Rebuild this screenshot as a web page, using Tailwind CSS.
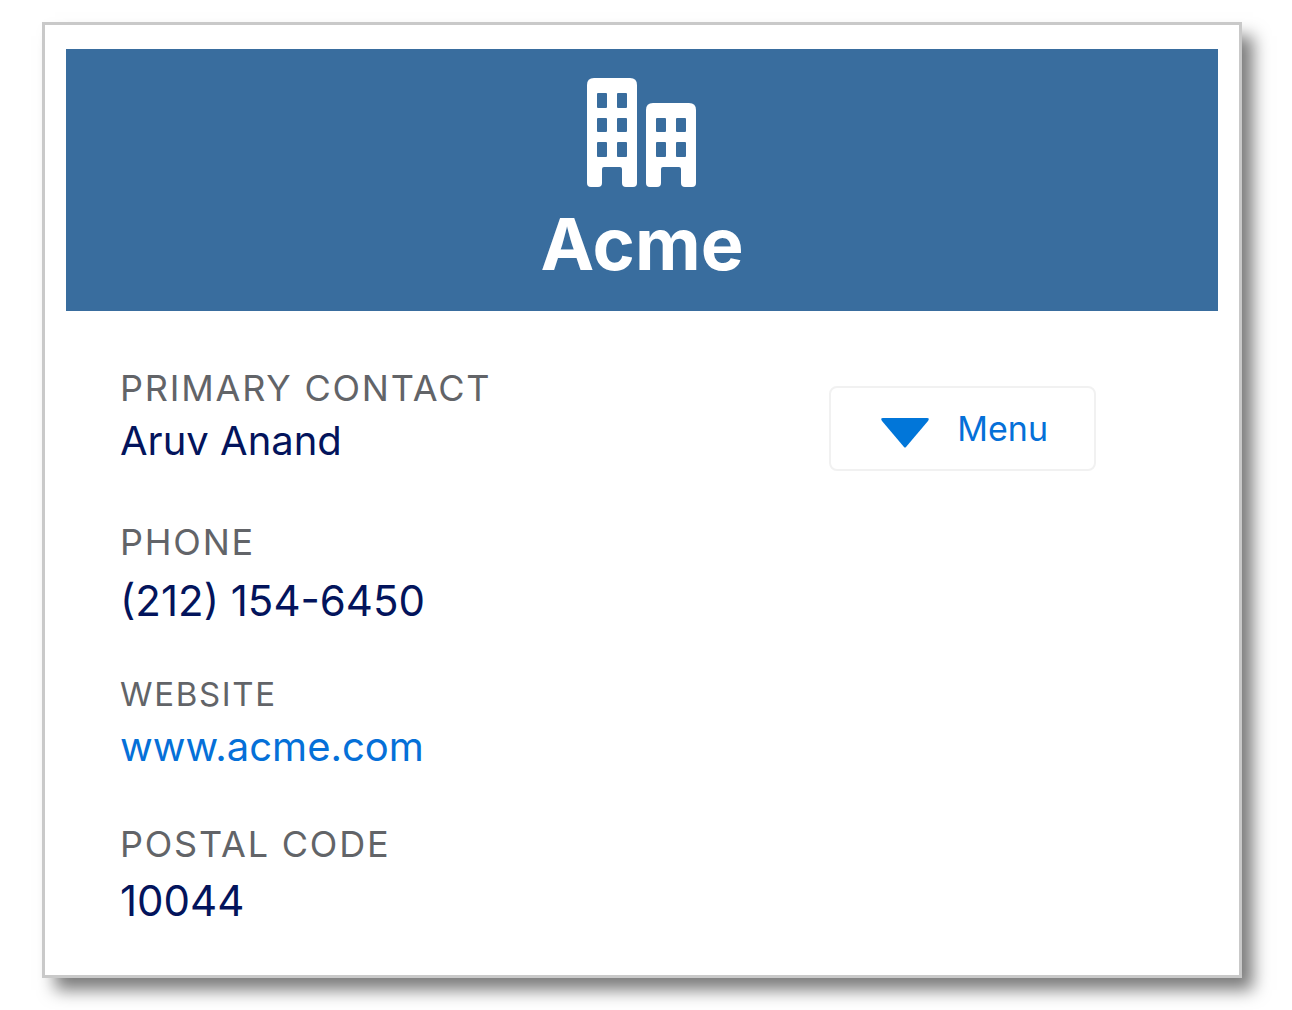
<!DOCTYPE html>
<html lang="en">
<head>
  <meta charset="UTF-8">
  <meta name="viewport" content="width=device-width, initial-scale=1.0">
  <title>Acme</title>
  <script src="https://cdn.jsdelivr.net/npm/@tailwindcss/browser@4"></script>
</head>
<body class="bg-white font-['Inter',sans-serif]">
  <!-- Account card -->
  <main class="mt-[22px] ml-[42px] mr-[50px] mb-8 border-3 border-[#c9c9c9] bg-white px-[21px] pt-6 pb-[45px] shadow-[12px_13px_16px_-1px_rgba(0,0,0,0.52)]">

    <!-- Banner -->
    <header class="flex flex-col items-center bg-[#396d9e] pt-[29px] pb-6 text-white">
      <svg class="h-[110px] w-[110px]" viewBox="0 0 110 110" fill="currentColor" fill-rule="evenodd" aria-hidden="true">
        <path d="M7 0H43Q50 0 50 7V105Q50 109 46 109H39Q35 109 35 105V91Q35 89 33 89H17Q15 89 15 91V105Q15 109 11 109H4Q0 109 0 105V7Q0 0 7 0ZM11 15h8q1 0 1 1v13q0 1-1 1h-8q-1 0-1-1v-13q0-1 1-1ZM31 15h8q1 0 1 1v13q0 1-1 1h-8q-1 0-1-1v-13q0-1 1-1ZM11 40h8q1 0 1 1v12q0 1-1 1h-8q-1 0-1-1v-12q0-1 1-1ZM31 40h8q1 0 1 1v12q0 1-1 1h-8q-1 0-1-1v-12q0-1 1-1ZM11 64h8q1 0 1 1v13q0 1-1 1h-8q-1 0-1-1v-13q0-1 1-1ZM31 64h8q1 0 1 1v13q0 1-1 1h-8q-1 0-1-1v-13q0-1 1-1Z"/>
        <path d="M66 25H102Q109 25 109 32V105Q109 109 105 109H98Q94 109 94 105V91Q94 89 92 89H76Q74 89 74 91V105Q74 109 70 109H63Q59 109 59 105V32Q59 25 66 25ZM70 40h8q1 0 1 1v12q0 1-1 1h-8q-1 0-1-1v-12q0-1 1-1ZM90 40h8q1 0 1 1v12q0 1-1 1h-8q-1 0-1-1v-12q0-1 1-1ZM70 64h8q1 0 1 1v13q0 1-1 1h-8q-1 0-1-1v-13q0-1 1-1ZM90 64h8q1 0 1 1v13q0 1-1 1h-8q-1 0-1-1v-13q0-1 1-1Z"/>
      </svg>
      <h1 class="mt-3 text-[72px] leading-[87px] font-bold">Acme</h1>
    </header>

    <!-- Details -->
    <div class="flex items-start justify-between pt-[53px] pr-[122px] pl-[54px]">
      <dl class="leading-[58px] text-[#03145c]">
        <div class="mb-12">
          <dt class="text-[36px] leading-[48px] tracking-wider text-[#626468]">PRIMARY CONTACT</dt>
          <dd class="text-[40px] leading-[58px]">Aruv Anand</dd>
        </div>
        <div class="mb-10">
          <dt class="text-[36px] leading-[48px] tracking-wider text-[#626468]">PHONE</dt>
          <dd class="mt-1.5 text-[42px] leading-[58px]">(212) 154-6450</dd>
        </div>
        <div class="mb-11">
          <dt class="text-[33px] leading-[48px] tracking-wider text-[#626468]">WEBSITE</dt>
          <dd class="text-[40px] leading-[58px]"><a href="#" class="text-[#0570d8]">www.acme.com</a></dd>
        </div>
        <div>
          <dt class="text-[36px] leading-[48px] tracking-wider text-[#626468]">POSTAL CODE</dt>
          <dd class="mt-1 text-[42px] leading-[58px]">10044</dd>
        </div>
      </dl>

      <button type="button" class="mt-[22px] flex items-center gap-7 rounded-lg border-2 border-[#f1f1f1] bg-white py-[18px] pr-[46px] pl-[50px] text-[34px] leading-[45px] text-[#0570d8]">
        <svg class="h-10 w-12" viewBox="0 0 48 40" fill="#0176d9" aria-hidden="true">
          <path d="M2 9H46Q49 9 47 12L25 38Q24 39 23 38L1 12Q-1 9 2 9Z"/>
        </svg>
        Menu
      </button>
    </div>
  </main>
</body>
</html>
